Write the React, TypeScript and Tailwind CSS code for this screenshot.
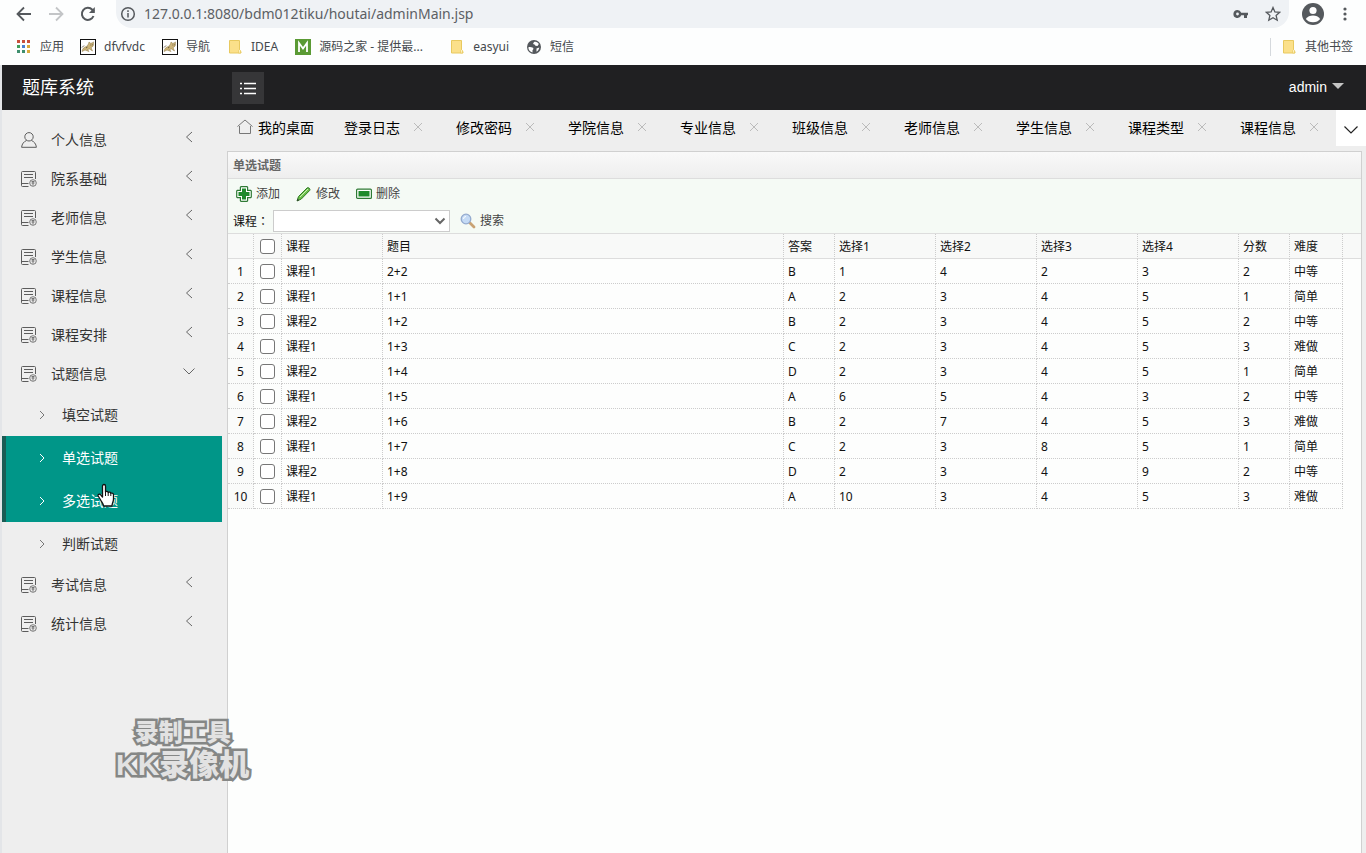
import { useState } from "react";
import type { ReactNode } from "react";

const bookmarks = [
  { label: "dfvfvdc", icon: <CatIcon /> },
  { label: "导航", icon: <CatIcon /> },
  { label: "IDEA", icon: <FolderIcon /> },
  { label: "源码之家 - 提供最...", icon: <LetterIcon />, wide: true },
  { label: "easyui", icon: <FolderIcon /> },
  { label: "短信", icon: <GlobeIcon /> },
];

const menu = [
  { label: "个人信息" },
  { label: "院系基础" },
  { label: "老师信息" },
  { label: "学生信息" },
  { label: "课程信息" },
  { label: "课程安排" },
  { label: "试题信息", children: ["填空试题", "单选试题", "多选试题", "判断试题"] },
  { label: "考试信息" },
  { label: "统计信息" },
];

const tabs = [
  "登录日志",
  "修改密码",
  "学院信息",
  "专业信息",
  "班级信息",
  "老师信息",
  "学生信息",
  "课程类型",
  "课程信息",
];

const columns = ["课程", "题目", "答案", "选择1", "选择2", "选择3", "选择4", "分数", "难度"];

const rows = [
  ["课程1", "2+2", "B", "1", "4", "2", "3", "2", "中等"],
  ["课程1", "1+1", "A", "2", "3", "4", "5", "1", "简单"],
  ["课程2", "1+2", "B", "2", "3", "4", "5", "2", "中等"],
  ["课程1", "1+3", "C", "2", "3", "4", "5", "3", "难做"],
  ["课程2", "1+4", "D", "2", "3", "4", "5", "1", "简单"],
  ["课程1", "1+5", "A", "6", "5", "4", "3", "2", "中等"],
  ["课程2", "1+6", "B", "2", "7", "4", "5", "3", "难做"],
  ["课程1", "1+7", "C", "2", "3", "8", "5", "1", "简单"],
  ["课程2", "1+8", "D", "2", "3", "4", "9", "2", "中等"],
  ["课程1", "1+9", "A", "10", "3", "4", "5", "3", "难做"],
];

function CatIcon() {
  return (
    <svg width="16" height="16" viewBox="0 0 16 16" aria-hidden>
      <rect x="0.5" y="0.5" width="15" height="15" fill="#fff" stroke="#111" />
      <path
        d="M2 12.500c.5-3 2-4.500 4.500-5L8.500 5 9 3l1.500 1.200 2-.2.8-1.200.2 2.400c0 1.800-1 2.800-2.500 3.300L12.500 12l-3-2-2 .5 1.500 2-4-1.500z"
        fill="#cdb57a"
        stroke="#8a7440"
        strokeWidth="0.5"
      />
      <path d="M2 8.500 4 6.500M10.500 6h.8M12.300 5.800h.7M6 9l1.500-1" stroke="#4b4030" strokeWidth="0.8" />
    </svg>
  );
}

function FolderIcon() {
  return (
    <svg width="16" height="16" viewBox="0 0 16 16" aria-hidden>
      <path d="M2.500 1.500h10v10l1.500 1v1.500H2.500z" fill="#fbe08a" stroke="#e8c95f" />
      <path d="M11.500 14v-2.500l1-1 1 1V14z" fill="#fdf0bd" stroke="#e8c95f" strokeWidth="0.7" />
    </svg>
  );
}

function LetterIcon() {
  return (
    <svg width="16" height="16" viewBox="0 0 16 16" aria-hidden>
      <rect width="16" height="16" fill="#5a9a34" />
      <path d="M4 13V4l4 5.500L12 4v9" fill="none" stroke="#fff" strokeWidth="1.800" />
    </svg>
  );
}

function GlobeIcon() {
  return (
    <svg width="16" height="16" viewBox="0 0 16 16" aria-hidden>
      <circle cx="8" cy="8" r="7" fill="#54585c" />
      <path d="M2.300 8.500c1.500-.8 3-.3 4.700.3 1 1 0 2-.5 2.500L6.500 13.500c-2.500-.6-4-2.500-4.200-5zM8 3c2-.8 3.800.2 4.800 2l-1.300 2-2-.3L8.500 5.500 7 5zM10.500 9.500l2.800-1c-.2 1.800-1.300 3.500-2.800 4.300z" fill="#fff" />
    </svg>
  );
}

function UserIcon() {
  return (
    <svg width="16" height="16" viewBox="0 0 16 16" fill="none" stroke="#5c5c5c" aria-hidden>
      <circle cx="8" cy="4.800" r="4.200" />
      <path d="M5.500 8.500C3 9.500.8 12 .6 15.300h14.800C15.200 12 13 9.500 10.500 8.500" />
    </svg>
  );
}

function DocIcon() {
  return (
    <svg width="16" height="16" viewBox="0 0 16 16" fill="none" stroke="#5c5c5c" aria-hidden>
      <path d="M7.500 15.500h-6a1 1 0 0 1-1-1v-13a1 1 0 0 1 1-1h12a1 1 0 0 1 1 1V8M3 3.500h9M3 6.500h9" />
      <path d="M.5 12.500h7" />
      <circle cx="12" cy="12" r="3.300" strokeWidth="0.8" />
      <path d="M10.500 10.500h3M10.500 12h3M12 10.500v4" strokeWidth="0.8" />
    </svg>
  );
}

function HomeIcon() {
  return (
    <svg width="16" height="16" viewBox="0 0 16 16" fill="none" stroke="#777" aria-hidden>
      <path d="M.5 7.500 8 1l7.500 6.500M2.500 7v7.500h11V7" />
    </svg>
  );
}

function Chevron({ d, className }: { d: string; className?: string }) {
  return (
    <svg width="12" height="12" viewBox="0 0 12 12" fill="none" stroke="currentColor" className={className} aria-hidden>
      <path d={d} />
    </svg>
  );
}

function HandCursor() {
  return (
    <svg width="20" height="26" viewBox="0 0 20 26" className="absolute left-[94px] top-1 z-10" aria-hidden>
      <path
        d="M6.500 14V3.200c0-2.300 3-2.300 3 0V9c.6-1 2.500-.8 2.700.5.8-.8 2.400-.4 2.600.8 1-.6 2.700 0 2.700 1.500V16c0 3-1.500 4-1.500 7H7.500c0-2.500-2-4-3.200-6.500L2.200 13c-.8-1.600 1.400-2.500 2.500-1.200z"
        fill="#fff"
        stroke="#111"
        strokeWidth="1.300"
        strokeLinejoin="round"
      />
      <path d="M9.500 9v4M12.200 9.500V13M14.800 10.500V13" stroke="#111" />
    </svg>
  );
}

function BrowserBar() {
  return (
    <div className="bg-[#fdfefe] text-[#45494d]">
      <div className="flex h-7 items-center pl-4 pr-[13px]">
        <button type="button" aria-label="后退" className="mr-4">
          <svg width="16" height="16" viewBox="0 0 16 16" fill="none" stroke="#55595d" strokeWidth="1.800">
            <path d="M15 8H2M8 1.500 1.500 8 8 14.500" />
          </svg>
        </button>
        <button type="button" aria-label="前进" className="mr-4">
          <svg width="16" height="16" viewBox="0 0 16 16" fill="none" stroke="#c3c5c7" strokeWidth="1.800">
            <path d="M1 8h13M8 1.500 14.500 8 8 14.500" />
          </svg>
        </button>
        <button type="button" aria-label="刷新" className="mr-5">
          <svg width="16" height="16" viewBox="0 0 16 16" fill="none" stroke="#55595d" strokeWidth="2">
            <path d="M13.500 10A6 6 0 1 1 12.300 3.800L14 5.500" />
            <path d="M14.800 1v6H9z" fill="#55595d" stroke="none" />
          </svg>
        </button>
        <div className="flex h-7 flex-1 items-center rounded-b-2xl bg-[#eff2f5] pl-1 pr-2">
          <svg width="16" height="16" viewBox="0 0 16 16" fill="none" stroke="#55595d" strokeWidth="1.500" aria-hidden>
            <circle cx="8" cy="8" r="6.300" />
            <path d="M8 7v4.500M8 4.300v1.600" />
          </svg>
          <input
            type="text"
            aria-label="地址"
            defaultValue="127.0.0.1:8080/bdm012tiku/houtai/adminMain.jsp"
            className="ml-2 min-w-0 flex-1 bg-transparent text-[14px] leading-5 text-[#5c6064] outline-none"
          />
          <svg width="16" height="16" viewBox="0 0 16 16" className="mr-4" aria-hidden>
            <path d="M4.500 4a4 4 0 1 0 3.700 5.300H11V12h3V9.300h1V6.700H8.200A4 4 0 0 0 4.500 4zm0 2.600a1.400 1.400 0 1 1 0 2.800 1.400 1.400 0 0 1 0-2.800z" fill="#55595d" />
          </svg>
          <svg width="16" height="16" viewBox="0 0 16 16" fill="none" stroke="#55595d" strokeWidth="1.300" aria-hidden>
            <path d="m8 1.500 1.900 4.400 4.800.4-3.600 3.200 1.100 4.700L8 11.700l-4.200 2.500 1.100-4.700L1.300 6.300l4.800-.4z" />
          </svg>
        </div>
        <button type="button" aria-label="用户" className="ml-3">
          <svg width="24" height="24" viewBox="0 0 24 24">
            <circle cx="12" cy="12" r="11" fill="#55595d" />
            <circle cx="12" cy="8.500" r="3.600" fill="#fff" />
            <path d="M4.800 17c1.500-2.500 4.500-3.500 7.200-3.500s5.700 1 7.200 3.500c-1.500 2-4.200 3.300-7.200 3.300S6.300 19 4.800 17z" fill="#fff" />
          </svg>
        </button>
        <button type="button" aria-label="更多" className="ml-3">
          <svg width="16" height="16" viewBox="0 0 16 16" fill="#55595d">
            <circle cx="8" cy="3" r="1.600" />
            <circle cx="8" cy="8" r="1.600" />
            <circle cx="8" cy="13" r="1.600" />
          </svg>
        </button>
      </div>
      <div className="flex h-[37px] items-center pl-4 pr-[13px] text-[12px]">
        <a href="#" className="mr-4 flex items-center gap-2">
          <svg width="16" height="16" viewBox="0 0 16 16" aria-hidden>
            <path d="M1 1h3v3H1zM6 1h3v3H6zM11 1h3v3h-3z" fill="#c9503c" />
            <path d="M1 6h3v3H1z" fill="#3f9e5a" />
            <path d="M6 6h3v3H6z" fill="#4a7fd0" />
            <path d="M11 6h3v3h-3zM11 11h3v3h-3z" fill="#d9a93a" />
            <path d="M1 11h3v3H1zM6 11h3v3H6z" fill="#3f8f6e" />
          </svg>
          应用
        </a>
        {bookmarks.map(({ label, icon, wide }) => (
          <a
            key={label}
            href="#"
            className={`mr-[17px] flex items-center gap-2 whitespace-nowrap ${wide ? "min-w-[137px]" : ""}`}
          >
            {icon}
            {label}
          </a>
        ))}
        <a href="#" className="ml-auto flex items-center gap-2 border-l border-[#d5d9dd] pl-[10px]">
          <FolderIcon />
          其他书签
        </a>
      </div>
    </div>
  );
}

function Sidebar() {
  const [open, setOpen] = useState("试题信息");

  return (
    <nav className="w-[220px] shrink-0 pt-[10px] text-[14px] text-[#333]" aria-label="菜单">
      <ul>
        {menu.map(({ label, children }, i) => (
          <li key={label}>
            <button
              type="button"
              aria-expanded={open === label}
              onClick={() => setOpen(open === label ? "" : label)}
              className="flex h-[39px] w-full items-center pl-[19px] pr-[27px]"
            >
              {i === 0 ? <UserIcon /> : <DocIcon />}
              <span className="ml-[14px]">{label}</span>
              <Chevron
                d={open === label ? "M.5 3.500 6 9l5.500-5.500" : "M9 1 3.500 6 9 11"}
                className="mb-[6px] ml-auto text-[#666]"
              />
            </button>
            {children && open === label && (
              <ul>
                {children.map((name) => {
                  const active = name === "单选试题" || name === "多选试题";
                  return (
                    <li key={name} className="relative">
                      <a
                        href="#"
                        className={`flex h-[43px] items-center border-l-4 pl-[30px] ${
                          active ? "border-[#1b5c55] bg-[#009688] text-white" : "border-transparent"
                        }`}
                      >
                        <Chevron d="M4 2l4 4-4 4" className={active ? "text-white" : "text-[#777]"} />
                        <span className="ml-[14px]">{name}</span>
                      </a>
                      {name === "多选试题" && <HandCursor />}
                    </li>
                  );
                })}
              </ul>
            )}
          </li>
        ))}
      </ul>
    </nav>
  );
}

function TabBar() {
  return (
    <div className="flex h-9 items-center text-[14px] text-black">
      <div className="flex min-w-0 flex-1 items-center overflow-hidden pb-[2px]" role="tablist">
        <button type="button" role="tab" className="flex shrink-0 items-center gap-[5px] px-[15px]">
          <HomeIcon />
          我的桌面
        </button>
        {tabs.map((tab) => (
          <div key={tab} className="flex w-[112px] shrink-0 items-center pl-[15px]">
            <button type="button" role="tab">
              {tab}
            </button>
            <button type="button" aria-label={`关闭${tab}`} className="ml-3 text-[#bbb]">
              <Chevron d="M2 2l8 8M10 2l-8 8" />
            </button>
          </div>
        ))}
      </div>
      <button type="button" aria-label="更多标签" className="flex h-9 w-[30px] items-center justify-center bg-white">
        <svg width="16" height="16" viewBox="0 0 16 16" fill="none" stroke="#222" strokeWidth="1.200">
          <path d="M1.500 6.500 8 13l6.500-6.500" />
        </svg>
      </button>
    </div>
  );
}

function ToolButton({ icon, children }: { icon: ReactNode; children: string }) {
  return (
    <button type="button" className="flex items-center gap-1 text-[#444]">
      {icon}
      {children}
    </button>
  );
}

function Toolbar() {
  return (
    <div className="border-b border-[#ddd] bg-[#f5faf5] text-[12px]">
      <div className="flex h-7 items-center gap-4 pl-2 pt-[2px]">
        <ToolButton
          icon={
            <svg width="16" height="16" viewBox="0 0 16 16" aria-hidden>
              <path
                d="M5 .7h6l.6.6V4.400h3.100l.6.6v6l-.6.600h-3.100v3.100l-.6.6H5l-.6-.6v-3.100H1.300L.7 11V5l.6-.6h3.100V1.300z"
                fill="#fff"
                stroke="#2f7a35"
                strokeWidth="1.200"
              />
              <path d="M6 2.500h4V6h3.500v4H10v3.500H6V10H2.500V6H6z" fill="#1f8a2c" />
            </svg>
          }
        >
          添加
        </ToolButton>
        <ToolButton
          icon={
            <svg width="16" height="16" viewBox="0 0 16 16" aria-hidden>
              <path d="M1 15l1.500-4.500L11 2c1-1.200 3.800.8 2.800 2.300L5.300 13z" fill="#6cc04a" stroke="#2f7a25" />
              <path d="M4 11l8-8" stroke="#c9efb5" />
              <path d="M1 15l.8-2.200 1.400 1.400z" fill="#333" />
            </svg>
          }
        >
          修改
        </ToolButton>
        <ToolButton
          icon={
            <svg width="16" height="16" viewBox="0 0 16 16" aria-hidden>
              <rect x="0.600" y="3.100" width="14.800" height="9.300" rx="1" fill="#fff" stroke="#2f7a35" strokeWidth="1.200" />
              <path d="M2.500 5h11v5.500h-11z" fill="#1f8a2c" />
            </svg>
          }
        >
          删除
        </ToolButton>
      </div>
      <div className="flex h-[26px] items-center pl-[5px] pt-[2px]">
        <label htmlFor="course" className="w-10 font-['Noto_Sans_CJK_TC',sans-serif] text-[#111]">
          课程：
        </label>
        <div className="relative">
          <select id="course" className="block h-[22px] w-[177px] appearance-none border border-[#ccc] bg-white outline-none">
            <option value="" />
            <option value="1">课程1</option>
            <option value="2">课程2</option>
          </select>
          <svg width="12" height="12" viewBox="0 0 12 12" fill="none" stroke="#666" strokeWidth="2" className="pointer-events-none absolute right-1 top-[5px]" aria-hidden>
            <path d="M1.500 3.500 6 8l4.500-4.500" />
          </svg>
        </div>
        <div className="ml-[10px]">
          <ToolButton
            icon={
              <svg width="16" height="16" viewBox="0 0 16 16" aria-hidden>
                <path d="M9.500 9.500 14 14" stroke="#c9a274" strokeWidth="2.800" strokeLinecap="round" />
                <circle cx="6" cy="6" r="4.800" fill="#c4daf5" stroke="#94aace" strokeWidth="1.300" />
                <path d="M3.500 6A2.500 2.500 0 0 1 6 3.500" stroke="#fff" fill="none" />
              </svg>
            }
          >
            搜索
          </ToolButton>
        </div>
      </div>
    </div>
  );
}

function CheckCell({ label }: { label: string }) {
  return (
    <input
      type="checkbox"
      aria-label={label}
      className="mx-auto block size-[15px] appearance-none rounded-[3px] border border-[#767676] bg-white checked:bg-[#009688]"
    />
  );
}

function QuestionTable() {
  const cell = "h-[25px] border-b border-r border-[#ccc] px-1 pb-0 font-normal";

  return (
    <table className="w-full table-fixed border-separate border-spacing-0 text-[12px] leading-4 text-[#111]">
      <colgroup>
        <col className="w-[26px]" />
        <col className="w-[28px]" />
        <col className="w-[101px]" />
        <col />
        <col className="w-[51px]" />
        <col className="w-[101px]" />
        <col className="w-[101px]" />
        <col className="w-[101px]" />
        <col className="w-[101px]" />
        <col className="w-[51px]" />
        <col className="w-[53px]" />
        <col className="w-[18px]" />
      </colgroup>
      <thead className="bg-[#f8f9f8]">
        <tr>
          <th className={`${cell} border-b-[#ddd] pt-0 [border-right-style:dotted]`} />
          <th className={`${cell} border-b-[#ddd] pt-0 [border-right-style:dotted]`}>
            <CheckCell label="全选" />
          </th>
          {columns.map((name) => (
            <th key={name} className={`${cell} border-b-[#ddd] pt-[2px] text-left [border-right-style:dotted]`}>
              {name}
            </th>
          ))}
          <th className="border-b border-[#ddd]" />
        </tr>
      </thead>
      <tbody>
        {rows.map((row, i) => (
          <tr key={i}>
            <td className={`${cell} border-dotted bg-[#fafbfa] pt-[2px] text-center`}>{i + 1}</td>
            <td className={`${cell} border-dotted pt-0`}>
              <CheckCell label={`选择第${i + 1}行`} />
            </td>
            {row.map((value, j) => (
              <td key={j} className={`${cell} border-dotted pt-[2px] text-left`}>
                {value}
              </td>
            ))}
          </tr>
        ))}
      </tbody>
    </table>
  );
}

function Watermark() {
  return (
    <div
      className="pointer-events-none absolute left-[116px] top-[719px] text-center font-['Liberation_Sans','Noto_Sans_CJK_SC',sans-serif] font-black text-[#e2e2e2] [-webkit-text-stroke:5px_#858786] [paint-order:stroke_fill]"
      aria-hidden
    >
      <div className="text-[24px] leading-7">录制工具</div>
      <div className="text-[30px] leading-9">KK录像机</div>
    </div>
  );
}

export default function App() {
  return (
    <div className="relative flex min-h-screen flex-col bg-[#eee] font-['Noto_Sans','Noto_Sans_CJK_SC',sans-serif]">
      <BrowserBar />
      <div className="flex flex-1 flex-col border-l-2 border-[#e3e5e8]">
        <header className="flex h-[45px] items-center bg-[#202022] text-white">
          <h1 className="w-[230px] pl-5 text-[18px]">题库系统</h1>
          <button type="button" aria-label="折叠菜单" className="flex size-8 items-center justify-center bg-[#363638]">
            <svg width="18" height="16" viewBox="0 0 18 16" fill="none" stroke="#fff" strokeWidth="1.300">
              <path d="M5 3.500h12M5 8.500h12M5 13.500h12M1 3.500h2M1 8.500h2M1 13.500h2" />
            </svg>
          </button>
          <button type="button" className="ml-auto mr-[22px] flex items-center gap-[5px] font-['Liberation_Sans',sans-serif] text-[14px]">
            admin
            <svg width="12" height="12" viewBox="0 0 12 12" fill="#c4c4c4" aria-hidden>
              <path d="M0 1h12L6 7z" />
            </svg>
          </button>
        </header>
        <div className="flex flex-1">
          <Sidebar />
          <div className="flex min-w-0 flex-1 flex-col">
            <TabBar />
            <main className="ml-[5px] mr-1 mt-[5px] flex-1 border-x border-t border-[#d0d0d0] bg-[#fdfefd]">
              <h2 className="h-[27px] border-b border-[#ddd] bg-linear-to-b from-[#f9f9f9] to-[#eee] pl-[5px] text-[12px] font-bold leading-[27px] text-[#666]">
                单选试题
              </h2>
              <Toolbar />
              <QuestionTable />
            </main>
          </div>
        </div>
      </div>
      <Watermark />
    </div>
  );
}
